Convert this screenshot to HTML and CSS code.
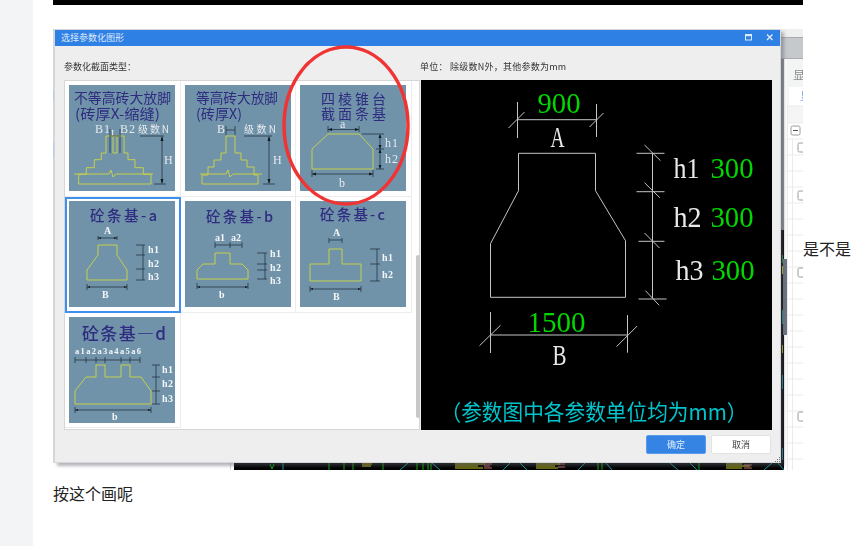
FILE: index.html
```html
<!DOCTYPE html>
<html lang="zh">
<head>
<meta charset="utf-8">
<title>按这个画呢</title>
<link rel="stylesheet" href="styles.css">
</head>
<body>
<aside class="gutter"></aside>
<main class="article">
  <div class="topbar"></div>
  <div class="figure-row">
    <div class="shot">
      <svg class="backdrop" viewBox="53 29 750 441" width="750" height="441">
        <rect x="53" y="29" width="1" height="434" fill="#d5d8dc"/>
        <rect x="53" y="90" width="1" height="11" fill="#b7cdea"/>
        <rect x="53" y="142" width="1" height="16" fill="#b7cdea"/>
        <rect x="781" y="29" width="22" height="9" fill="#eef0f0"/>
        <rect x="781" y="38" width="22" height="20" fill="#c6c9cc"/>
        <rect x="781" y="37" width="22" height="1" fill="#a9acaf"/>
        <rect x="781" y="58" width="22" height="1" fill="#a9acaf"/>
        <rect x="781" y="59" width="3" height="171" fill="#8d9094"/>
        <rect x="781" y="230" width="3" height="240" fill="#000"/>
        <rect x="784" y="59" width="3" height="411" fill="#fff"/>
        <rect x="783" y="259" width="4" height="76" fill="#6b7580"/>
        <rect x="782" y="255" width="1" height="8" fill="#1d8a4a"/>
        <rect x="782" y="266" width="1" height="8" fill="#c8b820"/>
        <rect x="782" y="310" width="1" height="14" fill="#0f8a90"/>
        <rect x="782" y="345" width="1" height="8" fill="#b5a818"/>
        <rect x="782" y="375" width="1" height="14" fill="#0f8a90"/>
        <rect x="782" y="448" width="1" height="12" fill="#0f8a90"/>
        <rect x="787" y="59" width="16" height="411" fill="#fff"/>
        <rect x="787" y="59" width="16" height="28" fill="#f3f4f4"/>
        <text class="bg-label" x="793" y="80">显</text>
        <rect x="787" y="87" width="2" height="19" fill="#f3f4f4"/>
        <text class="bg-tab" x="800" y="101">显</text>
        <rect x="787" y="106" width="16" height="17" fill="#f5f5f5"/>
        <path class="grid-line" d="M787 106H803M787 123H803M787 139H803M787 155H803M787 171H803M787 187H803M787 203H803M787 219H803M787 235H803M787 251H803M787 267H803M787 283H803M787 299H803M787 315H803M787 331H803M787 347H803M787 363H803M787 379H803M787 395H803M787 411H803M787 427H803M787 443H803M787 459H803M792.5 139V470M787.5 106V470"/>
        <rect x="791" y="126" width="9" height="9" rx="1.5" class="tree-box"/>
        <path d="M793 130.5H798" stroke="#555"/>
        <rect x="798" y="143" width="8" height="9" rx="1.5" class="tree-box"/>
        <rect x="798" y="191" width="8" height="9" rx="1.5" class="tree-box"/>
        <rect x="798" y="268" width="8" height="9" rx="1.5" class="tree-box"/>
        <rect x="798" y="412" width="8" height="9" rx="1.5" class="tree-box"/>
        <rect x="234" y="463" width="550" height="7" fill="#000"/>
        <rect x="230" y="463" width="1" height="7" fill="#d8d8d8"/>
        <path class="cad-g" d="M270 464L272 469L274 464M329 463V470M344 463V470M353 463V470M383 463V470M417 463V470M423 463V470M428 463V470M431 463V470M598 463V470M602 463V470M699 463V470"/>
        <path class="cad-c" d="M400 470L408 463M432 463L440 470M503 470L510 463M520 463L527 470M578 470L585 463M606 463L612 470M670 463L678 470M690 463L697 470M764 470L772 463M778 463L784 470M283 463V470"/>
        <path class="cad-y" d="M455 464H485M455 466H478M455 468H483M536 464H560M536 466H555M536 468H558M726 464H742M726 466H750M726 468H742M362 464H372M362 466H371"/>
        <path class="cad-r" d="M484 464H492M484 466H490M484 468H492M558 464H565M558 467H565M744 465H752M744 468H752"/>
      </svg>

      <section class="dialog">
        <header class="titlebar">
          <span class="title">选择参数化图形</span>
          <svg class="win-icons" viewBox="0 0 30 8" width="30" height="8">
            <rect x="1.5" y="1.5" width="6" height="5.5" fill="none" stroke="#dbe9fb"/>
            <path d="M1.5 2.5H7.5" stroke="#dbe9fb" stroke-width="1.4"/>
            <path d="M23 1.5L28.5 7M28.5 1.5L23 7" stroke="#e6f0fc" stroke-width="1.2"/>
          </svg>
        </header>
        <div class="labels">
          <span class="label-left">参数化截面类型：</span>
          <span class="label-right">单位： 除级数N外，其他参数为mm</span>
        </div>
        <div class="body-row">
          <div class="list">
            <div class="cell">
              <svg class="thumb" viewBox="0 0 106 106">
                <text class="ttl" x="5" y="18" textLength="97" lengthAdjust="spacingAndGlyphs">不等高砖大放脚</text>
                <text class="ttl" x="6" y="34" textLength="85" lengthAdjust="spacingAndGlyphs">(砖厚X-缩缝)</text>
                <text class="lab" x="26" y="48" textLength="15">B1</text>
                <text class="lab sm" x="42" y="52">L</text>
                <text class="lab" x="51" y="48" textLength="15">B2</text>
                <text class="lab cjk" x="69" y="48" textLength="31">级数N</text>
                <text class="lab" x="95" y="79">H</text>
                <path class="yel" d="M37 51V68H32.3V74.7H25.3V82.7H17.3V89.3H9.7V99H82V89.3H74.3V82.7H66V74.7H59V68H55V51ZM44 51V68H48V51"/>
                <path class="yel" d="M5 89H40L42 85L44 92L47 89H84"/>
                <path class="ink" d="M71 51H95M85 99H97M93 52V98M41 44V68M51 44V68M42 51H50"/>
                <path class="ink-fill" d="M93 51L91.5 56H94.5ZM93 99L91.5 94H94.5Z"/>
              </svg>
            </div>
            <div class="cell">
              <svg class="thumb" viewBox="0 0 106 106">
                <text class="ttl" x="11" y="18" textLength="82" lengthAdjust="spacingAndGlyphs">等高砖大放脚</text>
                <text class="ttl" x="11" y="34" textLength="46" lengthAdjust="spacingAndGlyphs">(砖厚X)</text>
                <text class="lab" x="32" y="48">B</text>
                <text class="lab cjk" x="59" y="48" textLength="32">级数N</text>
                <text class="lab" x="88" y="79">H</text>
                <path class="yel" d="M41 51V68H36V75H29V82H23V90H17V99H73V90H69V82H62V75H56V68H50V51Z"/>
                <path class="yel" d="M15 89H41L43 85L45 92L48 89H77"/>
                <path class="ink" d="M41 41V50M50 41V50M41 45H50M59 51H87M78 99H90M84 52V98"/>
                <path class="ink-fill" d="M84 51L82.5 56H85.5ZM84 99L82.5 94H85.5Z"/>
              </svg>
            </div>
            <div class="cell">
              <svg class="thumb" viewBox="0 0 106 106">
                <text class="ttl" x="21" y="19" textLength="65">四棱锥台</text>
                <text class="ttl" x="21" y="34" textLength="65">截面条基</text>
                <text class="lab" x="40" y="43">a</text>
                <text class="lab" x="85" y="62" textLength="13">h1</text>
                <text class="lab" x="85" y="78" textLength="13">h2</text>
                <text class="lab" x="39" y="102">b</text>
                <path class="yel" d="M28 49H59L73 64V84H12V64Z"/>
                <path class="ink" d="M28 41V47M59 41V47M28 44.5H59M62 49H84M76 64H84M76 84H84M80 50V84M12 85V92M73 85V92M12 89H73"/>
                <path class="ink-fill" d="M28 44.5L32 43V46ZM59 44.5L55 43V46ZM12 89L16 87.5V90.5ZM73 89L69 87.5V90.5ZM80 49L78.5 53H81.5ZM80 64L78.5 60H81.5ZM80 64L78.5 68H81.5ZM80 84L78.5 80H81.5Z"/>
              </svg>
            </div>
            <div class="cell selected">
              <svg class="thumb" viewBox="0 0 106 106">
                <text class="ttl bold" x="21" y="20" textLength="67">砼条基-a</text>
                <text class="lab bold sm" x="35" y="33">A</text>
                <text class="lab bold sm" x="33" y="97">B</text>
                <text class="lab bold sm" x="79" y="52" textLength="11">h1</text>
                <text class="lab bold sm" x="79" y="66" textLength="11">h2</text>
                <text class="lab bold sm" x="79" y="79" textLength="11">h3</text>
                <path class="yel" d="M29 44H48V54L58 69V79H18V69L29 54Z"/>
                <path class="ink" d="M29 35V39M48 35V39M29 37H48M18 83V89M58 83V89M18 86H58M67 44H76M67 54H76M67 68H76M67 79H76M74 44V79"/>
                <path class="ink-fill" d="M29 37L32 36V38ZM48 37L45 36V38ZM18 86L21 85V87ZM58 86L55 85V87Z"/>
              </svg>
            </div>
            <div class="cell">
              <svg class="thumb" viewBox="0 0 106 106">
                <text class="ttl bold" x="21" y="21" textLength="67">砼条基-b</text>
                <text class="lab bold sm" x="30" y="40" textLength="10">a1</text>
                <text class="lab bold sm" x="46" y="40" textLength="10">a2</text>
                <text class="lab bold sm" x="34" y="97">b</text>
                <text class="lab bold sm" x="85" y="56" textLength="11">h1</text>
                <text class="lab bold sm" x="85" y="70" textLength="11">h2</text>
                <text class="lab bold sm" x="85" y="83" textLength="11">h3</text>
                <path class="yel" d="M30 52H45V63H57L63 69V78H12V69L18 63H30Z"/>
                <path class="ink" d="M30 41V47M45 41V47M57 41V47M30 44H57M12 82V88M63 82V88M12 86H63M72 52H82M72 63H82M72 69H82M72 78H82M80 52V78"/>
                <path class="ink-fill" d="M12 86L15 85V87ZM63 86L60 85V87Z"/>
              </svg>
            </div>
            <div class="cell">
              <svg class="thumb" viewBox="0 0 106 106">
                <text class="ttl bold" x="20" y="19" textLength="65">砼条基-c</text>
                <text class="lab bold sm" x="33" y="35">A</text>
                <text class="lab bold sm" x="33" y="99">B</text>
                <text class="lab bold sm" x="82" y="60" textLength="11">h1</text>
                <text class="lab bold sm" x="82" y="77" textLength="11">h2</text>
                <path class="yel" d="M29 48H42V63H61V80H10V63H29Z"/>
                <path class="ink" d="M29 37V42M42 37V42M29 39H42M10 85V91M61 85V91M10 88H61M70 48H80M70 63H80M70 80H80M77 48V80"/>
                <path class="ink-fill" d="M10 88L13 87V89ZM61 88L58 87V89Z"/>
              </svg>
            </div>
            <div class="cell">
              <svg class="thumb" viewBox="0 0 106 106">
                <text class="ttl bold big" x="13" y="23" textLength="84">砼条基—d</text>
                <text class="lab bold tiny" x="6" y="37" textLength="66">a1a2a3a4a5a6</text>
                <text class="lab bold sm" x="43" y="103">b</text>
                <text class="lab bold sm" x="93" y="56" textLength="11">h1</text>
                <text class="lab bold sm" x="93" y="70" textLength="11">h2</text>
                <text class="lab bold sm" x="93" y="85" textLength="11">h3</text>
                <path class="yel" d="M6 87V74L17 60H27V48H36V60H52V48H61V60H72L82 74V87Z"/>
                <path class="ink" d="M6 40V46M17 40V46M27 40V46M36 40V46M52 40V46M61 40V46M71 40V46M6 43H71M6 90V96M82 90V96M6 93H82M83 48H91M83 60H91M83 74H91M83 87H91M87 48V87"/>
                <path class="ink-fill" d="M6 93L9 92V94ZM82 93L79 92V94Z"/>
              </svg>
            </div>
            <div class="list-scroll"></div>
          </div>
          <svg class="cad" viewBox="420.5 80 351 350" width="351" height="350">
            <text class="num" x="537" y="112.7" textLength="43" lengthAdjust="spacingAndGlyphs">900</text>
            <text class="let" x="550" y="147.3" textLength="14" lengthAdjust="spacingAndGlyphs">A</text>
            <path class="line" d="M517 119.7H596M517 102V138M596 104V137M508 128L524 112M589 127L603 113"/>
            <path class="line" d="M518 153.3H595V190.7L625 240.7V297.3H490V243.7L518 190.7Z"/>
            <path class="line" d="M652 153.3V298M636 153.3H664M636 191.7H664M638 241.3H664M638 299H666M644 145L660 160.7M644 182.7L659.3 197.7M644 233L659 248M645 290.7L658.7 305.3"/>
            <text class="let" x="673" y="177.7" textLength="26" lengthAdjust="spacingAndGlyphs">h1</text>
            <text class="num" x="710" y="177.7" textLength="43" lengthAdjust="spacingAndGlyphs">300</text>
            <text class="let" x="673" y="227.3" textLength="28" lengthAdjust="spacingAndGlyphs">h2</text>
            <text class="num" x="710" y="227.3" textLength="43" lengthAdjust="spacingAndGlyphs">300</text>
            <text class="let" x="675" y="280" textLength="28" lengthAdjust="spacingAndGlyphs">h3</text>
            <text class="num" x="711" y="280" textLength="43" lengthAdjust="spacingAndGlyphs">300</text>
            <text class="num" x="527" y="331.7" textLength="58" lengthAdjust="spacingAndGlyphs">1500</text>
            <text class="let" x="552" y="365" textLength="14" lengthAdjust="spacingAndGlyphs">B</text>
            <path class="line" d="M490 335H627M490 312V353M627 315V352.7M479 345.7L500 325.3M616 346.7L636.7 326"/>
            <text class="note" x="440" y="420" textLength="307" lengthAdjust="spacingAndGlyphs">（参数图中各参数单位均为mm）</text>
          </svg>
        </div>
        <footer class="actions">
          <button class="btn primary">确定</button>
          <button class="btn">取消</button>
          <svg class="grip" viewBox="0 0 7 7" width="7" height="7">
            <path d="M5 1h1v1H5zM3 3h1v1H3zM5 3h1v1H5zM1 5h1v1H1zM3 5h1v1H3zM5 5h1v1H5z" fill="#777"/>
          </svg>
        </footer>
      </section>

      <svg class="annotation" viewBox="0 0 750 441" width="750" height="441">
        <ellipse cx="293" cy="96.5" rx="62" ry="78.5" fill="none" stroke="#f03434" stroke-width="3.5"/>
      </svg>
    </div>
    <span class="aside-text">是不是</span>
  </div>
  <p class="caption">按这个画呢</p>
</main>
</body>
</html>
```

FILE: styles.css
```css
* { box-sizing: border-box; }

html, body {
  margin: 0;
  height: 100%;
  overflow: hidden;
  background: #fff;
}

body {
  display: flex;
  font-family: "Noto Sans CJK SC", "Liberation Sans", sans-serif;
  color: #222;
}

.gutter {
  width: 33px;
  flex: none;
  background: #f3f4f6;
}

.article {
  flex: 1;
  min-width: 0;
  padding-left: 20px;
}

.topbar {
  width: 750px;
  height: 5px;
  background: #000;
}

.figure-row {
  display: flex;
  align-items: center;
  margin-top: 24px;
}

.shot {
  position: relative;
  flex: none;
  width: 750px;
  height: 441px;
  filter: blur(0.35px);
}

.backdrop {
  display: block;
}

.aside-text {
  flex: none;
  font-size: 16px;
  line-height: 22px;
  padding-bottom: 3px;
}

.caption {
  margin: 12px 0 0;
  font-size: 16px;
  line-height: 22px;
}

/* dialog */
.dialog {
  position: absolute;
  left: 1px;
  top: 0;
  width: 727px;
  height: 434px;
  display: flex;
  flex-direction: column;
  background: #eeeeee;
  box-shadow: 3px 3px 3px rgba(90, 95, 105, 0.45);
  outline: 1px solid #d4d6da;
  outline-offset: -1px;
  font-size: 9px;
}

.titlebar {
  flex: none;
  height: 17px;
  display: flex;
  align-items: center;
  justify-content: space-between;
  padding: 0 7px 1px 7px;
  background: #2f80e4;
  color: #dfeafa;
}

.win-icons {
  display: block;
}

.labels {
  flex: none;
  height: 34px;
  display: flex;
  align-items: center;
  padding: 6px 0 0 10px;
  color: #333;
}

.label-left {
  width: 356px;
  flex: none;
}

.label-right {
  letter-spacing: 0.25px;
}

.body-row {
  flex: none;
  display: flex;
  height: 350px;
  padding-left: 10px;
}

.list {
  position: relative;
  flex: none;
  width: 356px;
  height: 350px;
  display: grid;
  grid-template-columns: repeat(3, 115.7px);
  grid-auto-rows: 115.8px;
  align-content: start;
  background: #fff;
  border: 1px solid #d6d6d6;
}

.cell {
  position: relative;
  padding: 4px;
  border-right: 1px solid #ececec;
  border-bottom: 1px solid #ececec;
}

.cell.selected {
  outline: 2px solid #3f8fee;
  outline-offset: -2px;
}

.thumb {
  display: block;
  width: 106px;
  height: 106px;
  background: #7093aa;
}

.ttl {
  font-size: 14px;
  fill: #2f2c80;
  font-family: "Noto Sans CJK SC", sans-serif;
  font-weight: 400;
}

.ttl.bold { font-weight: 500; font-size: 14.5px; }
.ttl.big { font-size: 17px; }

.lab {
  font-family: "Liberation Serif", serif;
  font-size: 12px;
  fill: #e6eaee;
}

.lab.cjk {
  font-family: "Noto Sans CJK SC", sans-serif;
  font-size: 10px;
}

.lab.sm { font-size: 10px; }
.lab.tiny { font-size: 8.5px; }
.lab.bold { font-weight: 700; fill: #f4f6f8; }

.yel {
  fill: none;
  stroke: #c6cf4a;
  stroke-width: 1;
}

.ink {
  fill: none;
  stroke: #1e2a33;
  stroke-width: 0.7;
}

.ink-fill {
  fill: #111a22;
}

.list-scroll {
  position: absolute;
  right: -1px;
  top: 174px;
  width: 4px;
  height: 163px;
  border-radius: 2px;
  background: #c8c8c8;
}

.cad {
  display: block;
  flex: none;
  margin-left: 0.5px;
  background: #000;
}

.num {
  font-family: "Liberation Serif", serif;
  font-size: 30px;
  fill: #00d800;
}

.let {
  font-family: "Liberation Serif", serif;
  font-size: 30px;
  fill: #e8e8e8;
}

.note {
  font-family: "Noto Sans CJK SC", sans-serif;
  font-weight: 400;
  font-size: 22px;
  fill: #00c4cc;
}

.line {
  fill: none;
  stroke: #c4c4c4;
  stroke-width: 1;
}

.actions {
  position: relative;
  flex: 1;
  display: flex;
  justify-content: flex-end;
  gap: 5px;
  padding: 5px 10px 0 0;
}

.btn {
  width: 60px;
  height: 19px;
  padding: 0;
  font: 9px "Noto Sans CJK SC", sans-serif;
  color: #444;
  background: #fff;
  border: 1px solid #e2e2e2;
  border-radius: 2px;
}

.btn.primary {
  color: #e4effc;
  background: #3584e4;
  border-color: #5a9cec;
}

.grip {
  position: absolute;
  right: 0;
  bottom: 0;
}

.annotation {
  position: absolute;
  left: 0;
  top: 0;
  pointer-events: none;
}

/* scraps of the application behind the dialog */
.grid-line { fill: none; stroke: #ebebeb; stroke-width: 1; }
.tree-box { fill: #fff; stroke: #9a9a9a; }
.bg-label { font: 12px "Noto Sans CJK SC", sans-serif; fill: #8a8a8a; }
.bg-tab { font: 12px "Noto Sans CJK SC", sans-serif; fill: #7ba6e6; }
.cad-g { fill: none; stroke: #0ca80c; }
.cad-c { fill: none; stroke: #0f9aa0; }
.cad-y { fill: none; stroke: #c8c820; }
.cad-r { fill: none; stroke: #c86a6a; }
```
